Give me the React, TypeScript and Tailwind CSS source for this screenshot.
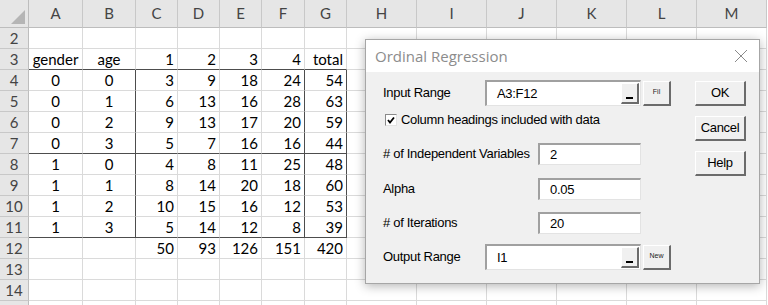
import React from "react";

const cols = ["A", "B", "C", "D", "E", "F", "G", "H", "I", "J", "K", "L", "M"];

const data: Record<number, (string | number)[]> = {
  3: ["gender", "age", 1, 2, 3, 4, "total"],
  4: [0, 0, 3, 9, 18, 24, 54],
  5: [0, 1, 6, 13, 16, 28, 63],
  6: [0, 2, 9, 13, 17, 20, 59],
  7: [0, 3, 5, 7, 16, 16, 44],
  8: [1, 0, 4, 8, 11, 25, 48],
  9: [1, 1, 8, 14, 20, 18, 60],
  10: [1, 2, 10, 15, 16, 12, 53],
  11: [1, 3, 5, 14, 12, 8, 39],
  12: ["", "", 50, 93, 126, 151, 420],
};

const rows = [2, 3, 4, 5, 6, 7, 8, 9, 10, 11, 12, 13, 14, 15];

const cellClass = (row: number, col: number) => {
  const darkBottom = (row === 3 || row === 7 || row === 11) && col <= 6;
  const darkRight = row >= 4 && row <= 11 && (col === 1 || col === 5 || col === 6);
  const align = col <= 1 ? "justify-center" : "justify-end pr-[3px]";
  return [
    "flex items-center border-r border-b h-[21px] bg-white",
    darkBottom ? "border-b-[#4d4d4d]" : "border-b-[#dadada]",
    darkRight ? "border-r-[#4d4d4d]" : "border-r-[#dadada]",
    align,
  ].join(" ");
};

const Field = ({ value, className }: { value: string; className: string }) => (
  <div
    className={`flex items-center h-[22px] bg-white border-t-2 border-l-2 border-t-[#a0a0a0] border-l-[#a0a0a0] border-b border-r border-b-[#e3e3e3] border-r-[#e3e3e3] pl-[10px] ${className}`}
  >
    {value}
  </div>
);

const RangeField = ({ value }: { value: string }) => (
  <div className="flex items-stretch w-[156px] h-[26px] bg-white border-t-2 border-l-2 border-t-[#a0a0a0] border-l-[#a0a0a0] border-b border-r border-b-[#e3e3e3] border-r-[#e3e3e3]">
    <div className="flex-1 flex items-center pl-[10px]">{value}</div>
    <div className="w-[18px] my-[1px] mr-[1px] bg-[#f0f0f0] border-b-2 border-r-2 border-b-[#6b6b6b] border-r-[#6b6b6b] border-t border-l border-t-white border-l-white flex items-end justify-center pb-[3px]">
      <div className="w-[7px] h-[2px] bg-black" />
    </div>
  </div>
);

const SmallButton = ({ label }: { label: string }) => (
  <div className="w-[28px] h-[25px] bg-[#f0f0f0] border-t border-l border-t-white border-l-white border-b-2 border-r-2 border-b-[#6b6b6b] border-r-[#6b6b6b] flex items-center justify-center text-[7px] tracking-normal text-[#222]">
    {label}
  </div>
);

const Button = ({ label }: { label: string }) => (
  <div className="w-[51px] h-[25px] bg-[#f0f0f0] border-t border-l border-t-white border-l-white border-b-2 border-r-2 border-b-[#6b6b6b] border-r-[#6b6b6b] flex items-center justify-center text-[13px] text-black">
    {label}
  </div>
);

export default function App() {
  return (
    <div className="relative w-[768px] h-[305px] overflow-hidden bg-white font-['Lato',sans-serif] text-[15px] text-black">
      <div className="grid grid-cols-[29px_54px_53px_42px_42px_42px_43px_42px_70px_70px_70px_70px_70px_70px]">
        <div className="h-[28px] bg-[#e6e6e6] border-r border-b border-r-[#bdbdbd] border-b-[#bdbdbd] flex items-end justify-end p-[3px]">
          <svg width="14" height="14" viewBox="0 0 14 14">
            <polygon points="14,0 14,14 0,14" fill="#b5b5b5" />
          </svg>
        </div>
        {cols.map((c) => (
          <div
            key={c}
            className="h-[28px] bg-[#e6e6e6] border-r border-b border-r-[#c8c8c8] border-b-[#bdbdbd] flex items-center justify-center text-[#444]"
          >
            {c}
          </div>
        ))}
        {rows.map((r) => (
          <React.Fragment key={r}>
            <div className="h-[21px] bg-[#e6e6e6] border-r border-b border-r-[#bdbdbd] border-b-[#c8c8c8] flex items-center justify-center text-[#444]">
              {r < 15 ? r : ""}
            </div>
            {cols.map((c, i) => (
              <div key={c} className={cellClass(r, i)}>
                {data[r]?.[i] ?? ""}
              </div>
            ))}
          </React.Fragment>
        ))}
      </div>

      {/* dialog floats over the sheet */}
      <div className="absolute left-[365px] top-[39px] w-[395px] h-[245px] flex flex-col bg-[#f0f0f0] border border-[#a6a6a6] shadow-[0_2px_10px_rgba(0,0,0,0.3)] font-['Liberation_Sans',sans-serif] text-[13px] tracking-[-0.3px] text-black">
        <div className="h-[32px] bg-white flex items-center justify-between pl-[9px] pr-[11px]">
          <span className="font-['Open_Sans',sans-serif] text-[15px] tracking-normal text-[#8c8c8c]">Ordinal Regression</span>
          <svg width="14" height="14" viewBox="0 0 14 14">
            <path d="M1 1 L13 13 M13 1 L1 13" stroke="#8a8a8a" strokeWidth="1" />
          </svg>
        </div>
        <div className="flex flex-1 pl-[17px] pr-[14px]">
          <div className="flex flex-col w-[288px] pt-[7px]">
            <div className="flex items-center h-[28px]">
              <span className="w-[102px]">Input Range</span>
              <RangeField value="A3:F12" />
              <div className="ml-[2px]">
                <SmallButton label="Fil" />
              </div>
            </div>
            <div className="flex items-center h-[18px] mt-[4px]">
              <div className="ml-[2px] w-[12px] h-[12px] bg-white border-t border-l border-t-[#8a8a8a] border-l-[#8a8a8a] border-b border-r border-b-[#e3e3e3] border-r-[#e3e3e3] flex items-center justify-center">
                <svg width="8" height="8" viewBox="0 0 8 8">
                  <path d="M1 4 L3 6.5 L7 1.5" stroke="#000" strokeWidth="1.8" fill="none" />
                </svg>
              </div>
              <span className="ml-[4px]">Column headings included with data</span>
            </div>
            <div className="flex items-center h-[22px] mt-[14px]">
              <span className="w-[155px]">#&nbsp;of Independent Variables</span>
              <Field value="2" className="w-[103px]" />
            </div>
            <div className="flex items-center h-[22px] mt-[13px]">
              <span className="w-[155px]">Alpha</span>
              <Field value="0.05" className="w-[103px]" />
            </div>
            <div className="flex items-center h-[22px] mt-[12px]">
              <span className="w-[155px]">#&nbsp;of Iterations</span>
              <Field value="20" className="w-[103px]" />
            </div>
            <div className="flex items-center h-[24px] mt-[11px]">
              <span className="w-[102px]">Output Range</span>
              <RangeField value="I1" />
              <div className="ml-[2px]">
                <SmallButton label="New" />
              </div>
            </div>
          </div>
          <div className="flex flex-col gap-[10px] ml-[24px] pt-[9px]">
            <Button label="OK" />
            <Button label="Cancel" />
            <Button label="Help" />
          </div>
        </div>
      </div>
    </div>
  );
}
